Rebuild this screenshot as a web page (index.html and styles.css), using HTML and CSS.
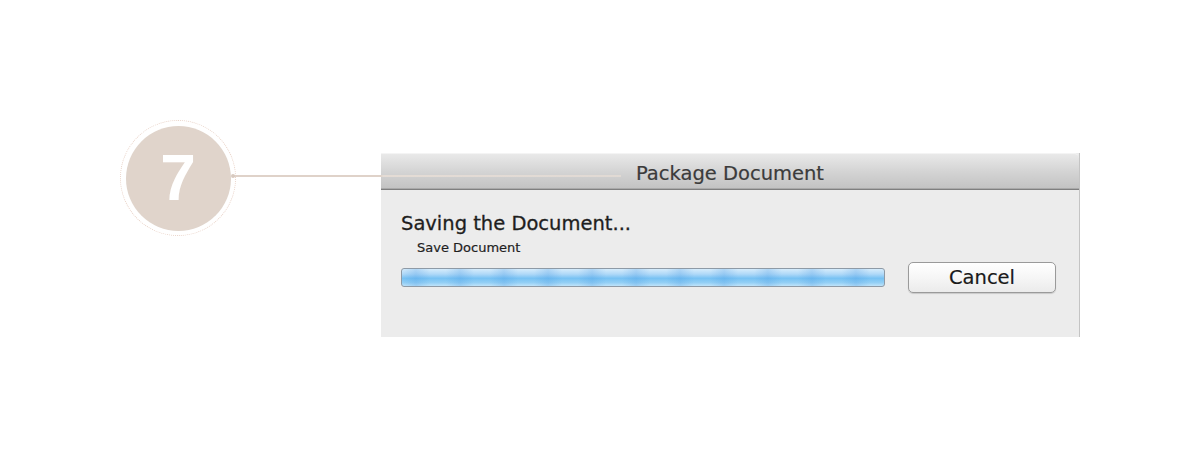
FILE: index.html
```html
<!DOCTYPE html>
<html>
<head>
<meta charset="utf-8">
<link rel="stylesheet" href="styles.css">
</head>
<body>
<div class="stage">
  <div class="callout">
    <div class="badge">7</div>
    <div class="connector"><span class="tip"></span></div>
  </div>
  <div class="dialog">
    <div class="titlebar">Package Document</div>
    <div class="dialog-body">
      <div class="heading">Saving the Document...</div>
      <div class="sub">Save Document</div>
      <div class="controls">
        <div class="progress"></div>
        <button class="cancel">Cancel</button>
      </div>
    </div>
  </div>
</div>
</body>
</html>
```
FILE: styles.css
```css
html, body {
  margin: 0;
  padding: 0;
  background: #ffffff;
}
.stage {
  width: 1200px;
  height: 450px;
  box-sizing: border-box;
  padding: 120px 0 0 120px;
  display: flex;
  align-items: flex-start;
  position: relative;
}
.callout {
  width: 116px;
  height: 116px;
  border-radius: 50%;
  border: 1px dotted #e9d3c8;
  box-sizing: border-box;
  display: flex;
  align-items: center;
  justify-content: center;
  position: relative;
  flex: none;
}
.badge {
  width: 105px;
  height: 105px;
  border-radius: 50%;
  background: #e0d4cb;
  color: #ffffff;
  font-family: "Liberation Sans", Arial, sans-serif;
  font-weight: bold;
  font-size: 64px;
  line-height: 105px;
  text-align: center;
}
.connector {
  position: absolute;
  left: 112px;
  top: 54px;
  width: 388px;
  height: 2px;
  background: linear-gradient(to right, #dfd2c9 0, #dfd2c9 148px, rgba(232,222,214,0.85) 150px, rgba(232,222,214,0.7) 100%);
  z-index: 2;
}
.tip {
  position: absolute;
  left: -2px;
  top: -1px;
  width: 4px;
  height: 4px;
  border-radius: 50%;
  background: #d8cac0;
}
.dialog {
  margin-left: 145px;
  margin-top: 33px;
  width: 699px;
  height: 184px;
  background: #ececec;
  box-sizing: border-box;
  border-right: 1px solid #c4c4c4;
  flex: none;
  display: flex;
  flex-direction: column;
  font-family: "DejaVu Sans", "Lucida Grande", sans-serif;
}
.titlebar {
  height: 37px;
  box-sizing: border-box;
  border-top: 1px solid #f4f4f4;
  border-bottom: 1px solid #7f7f7f;
  border-top-right-radius: 5px;
  background: linear-gradient(to bottom, #e9e9e9 0%, #d6d6d6 45%, #c2c2c2 100%);
  color: #3b3b3b;
  font-size: 19.5px;
  padding-top: 5px;
  line-height: 30px;
  text-align: center;
  box-shadow: inset 0 -1px 0 #a9a9a9;
  -webkit-text-stroke: 0.2px #3b3b3b;
}
.dialog-body {
  padding: 22px 23px 0 20px;
}
.heading {
  font-size: 19.5px;
  line-height: 24px;
  color: #1e1e1e;
  -webkit-text-stroke: 0.3px #1e1e1e;
}
.sub {
  font-size: 13px;
  line-height: 16px;
  color: #1e1e1e;
  margin-left: 16px;
  margin-top: 4px;
  -webkit-text-stroke: 0.2px #1e1e1e;
}
.controls {
  display: flex;
  align-items: center;
  justify-content: space-between;
  margin-top: 6px;
}
.progress {
  width: 484px;
  height: 19px;
  box-sizing: border-box;
  border: 1px solid #8e9aa6;
  border-radius: 3px;
  background:
    repeating-linear-gradient(to right, rgba(70,150,225,0) 0px, rgba(70,150,225,0.25) 14px, rgba(70,150,225,0) 28px, rgba(255,255,255,0) 44px),
    linear-gradient(to bottom, #d6ecfb 0%, #b0d9f8 30%, #78c2f3 55%, #93cff5 80%, #c0e3f9 100%);
}
.cancel {
  width: 148px;
  height: 31px;
  border: 1px solid #9a9a9a;
  border-radius: 5px;
  background: linear-gradient(to bottom, #ffffff 0%, #f6f6f6 50%, #ebebeb 100%);
  font-family: "DejaVu Sans", "Lucida Grande", sans-serif;
  font-size: 19.5px;
  color: #1a1a1a;
  padding: 0;
  box-shadow: 0 1px 1px rgba(0,0,0,0.15);
  -webkit-text-stroke: 0.2px #1a1a1a;
}
```
